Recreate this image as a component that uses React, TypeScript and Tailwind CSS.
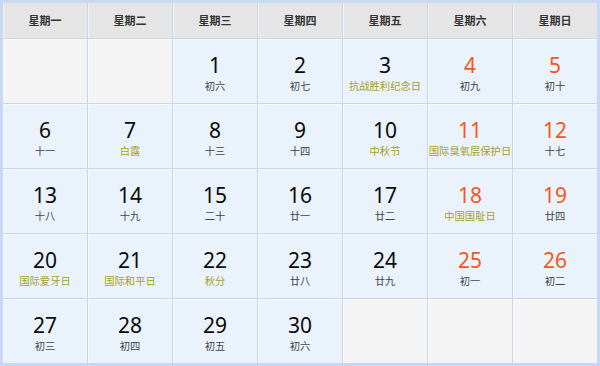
import React from "react";

type Cell = { d?: number; t?: string; fest?: boolean; we?: boolean };

const heads = ["星期一", "星期二", "星期三", "星期四", "星期五", "星期六", "星期日"];

const cells: Cell[] = [
  {}, {},
  { d: 1, t: "初六" }, { d: 2, t: "初七" }, { d: 3, t: "抗战胜利纪念日", fest: true },
  { d: 4, t: "初九", we: true }, { d: 5, t: "初十", we: true },
  { d: 6, t: "十一" }, { d: 7, t: "白露", fest: true }, { d: 8, t: "十三" }, { d: 9, t: "十四" },
  { d: 10, t: "中秋节", fest: true }, { d: 11, t: "国际臭氧层保护日", fest: true, we: true }, { d: 12, t: "十七", we: true },
  { d: 13, t: "十八" }, { d: 14, t: "十九" }, { d: 15, t: "二十" }, { d: 16, t: "廿一" },
  { d: 17, t: "廿二" }, { d: 18, t: "中国国耻日", fest: true, we: true }, { d: 19, t: "廿四", we: true },
  { d: 20, t: "国际爱牙日", fest: true }, { d: 21, t: "国际和平日", fest: true }, { d: 22, t: "秋分", fest: true },
  { d: 23, t: "廿八" }, { d: 24, t: "廿九" }, { d: 25, t: "初一", we: true }, { d: 26, t: "初二", we: true },
  { d: 27, t: "初三" }, { d: 28, t: "初四" }, { d: 29, t: "初五" }, { d: 30, t: "初六" },
  {}, {}, {},
];

export default function App() {
  return (
    <div className="w-[600px] h-[366px] bg-[#c6d8f3] p-[3px] font-['Noto_Sans','Noto_Sans_CJK_SC',sans-serif]">
      <div className="grid grid-cols-[repeat(7,84px)] grid-rows-[35px_repeat(5,64px)] gap-px bg-[#c8d6ea]">
        {heads.map((h) => (
          <div
            key={h}
            className="bg-[#e5e5e5] shadow-[inset_1px_0_0_#f2f2f2] flex items-center justify-center text-[11px] font-bold text-[#333] font-['Noto_Sans_CJK_SC',sans-serif]"
          >
            {h}
          </div>
        ))}
        {cells.map((c, i) =>
          c.d ? (
            <div
              key={i}
              className="bg-[#eaf3fb] shadow-[inset_1px_1px_0_#f6fafe] flex flex-col items-center pt-[12px]"
            >
              <div
                className={
                  "text-[21px] leading-[28px] font-['Noto_Sans',sans-serif] " +
                  (c.we ? "text-[#f2581e]" : "text-[#0a0a0a]")
                }
              >
                {c.d}
              </div>
              <div
                className={
                  "text-[10.3px] leading-[14px] whitespace-nowrap font-['Noto_Sans_CJK_SC',sans-serif] " +
                  (c.fest ? "text-[#a5a21c]" : "text-[#444]")
                }
              >
                {c.t}
              </div>
            </div>
          ) : (
            <div key={i} className="bg-[#f4f4f4] shadow-[inset_1px_1px_0_#fafafa]" />
          )
        )}
      </div>
    </div>
  );
}
